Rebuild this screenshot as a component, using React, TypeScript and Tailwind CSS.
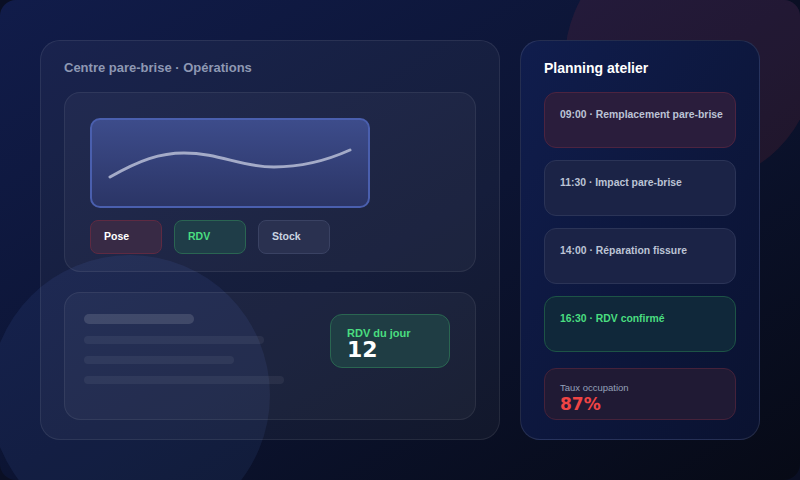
import React from "react";

const sans = { fontFamily: '"Liberation Sans", Arial, sans-serif' };
const heavy = { fontFamily: '"DejaVu Sans", "Liberation Sans", sans-serif' };

function Chip({ label, tone }: { label: string; tone: "red" | "green" | "gray" }) {
  const styles = {
    red: "bg-[#382a45] border-[#5e2a42] text-white",
    green: "bg-[#1f3d48] border-[#2a6552] text-[#4ade80]",
    gray: "bg-[#2a3150] border-[#3a4263] text-[#cbd5e1]",
  }[tone];
  return (
    <div
      className={`w-[72px] h-[34px] rounded-[8px] border flex items-center pl-[13px] text-[10.5px] font-bold ${styles}`}
    >
      {label}
    </div>
  );
}

function Slot({ text, tone }: { text: string; tone: "red" | "plain" | "green" }) {
  const styles = {
    red: "bg-[#2a1d3c] border-[#4c2440] text-[#bcc3d5]",
    plain: "bg-[#1b2346] border-[#2b3457] text-[#bcc3d5]",
    green: "bg-[#10283a] border-[#1d5446] text-[#4ade80]",
  }[tone];
  return (
    <div className={`h-[56px] rounded-[12px] border pl-[15px] pt-[15px] text-[10.4px] font-bold leading-[14px] whitespace-nowrap ${styles}`}>
      {text}
    </div>
  );
}

export default function App() {
  return (
    <div className="w-[800px] h-[480px] bg-[#0a0f24]" style={sans}>
      <div className="relative w-[800px] h-[480px] rounded-[16px] overflow-hidden bg-gradient-to-br from-[#111c4a] via-[#0c1433] to-[#070a16]">
        {/* soft decorative blobs */}
        <div className="absolute left-[565px] top-[-65px] w-[250px] h-[250px] rounded-full bg-[#ef4444]/10" />
        <div className="absolute left-[-10px] top-[255px] w-[280px] h-[280px] rounded-full bg-[#5b7fd9]/10" />

        <div className="relative flex gap-[20px] p-[40px] h-full">
          {/* operations panel */}
          <div className="w-[460px] h-[400px] rounded-[20px] border border-white/[0.08] bg-white/[0.04] px-[23px] pt-[19px]">
            <div className="h-[16px] leading-[16px] text-[13px] font-bold text-[#8e98b3]">
              Centre pare-brise · Opérations
            </div>

            <div className="mt-[16px] h-[180px] rounded-[16px] border border-white/[0.07] bg-white/[0.035] pl-[25px] pt-[25px]">
              <div className="w-[280px] h-[90px] rounded-[10px] border-2 border-[#4a5fae] bg-gradient-to-b from-[#3d4c8b] to-[#2b3566]">
                <svg width="276" height="86" viewBox="0 0 276 86" className="-ml-[2px] -mt-[2px]">
                  <path
                    d="M20 59 C 50 42, 70 35, 94 35 C 130 35, 150 49, 184 49 C 215 49, 240 41, 260 32"
                    fill="none"
                    stroke="#a4abc8"
                    strokeWidth="3"
                    strokeLinecap="round"
                  />
                </svg>
              </div>
              <div className="mt-[12px] flex gap-[12px]">
                <Chip label="Pose" tone="red" />
                <Chip label="RDV" tone="green" />
                <Chip label="Stock" tone="gray" />
              </div>
            </div>

            <div className="mt-[20px] h-[128px] rounded-[16px] border border-white/[0.07] bg-white/[0.035] pl-[19px] pr-[25px] pt-[21px] flex justify-between items-start">
              <div className="flex flex-col">
                <div className="w-[110px] h-[10px] rounded-full bg-white/[0.13]" />
                <div className="mt-[12px] w-[180px] h-[8px] rounded-full bg-white/[0.06]" />
                <div className="mt-[12px] w-[150px] h-[8px] rounded-full bg-white/[0.06]" />
                <div className="mt-[12px] w-[200px] h-[8px] rounded-full bg-white/[0.06]" />
              </div>
              <div className="w-[120px] h-[54px] rounded-[12px] border border-[#2a6651] bg-[#1f3d44] pl-[16px] pt-[11px]">
                <div className="text-[11px] leading-[14px] font-bold text-[#4ade80]">RDV du jour</div>
                <div className="text-[22px] leading-[20px] font-bold text-white" style={heavy}>
                  12
                </div>
              </div>
            </div>
          </div>

          {/* schedule panel */}
          <div className="w-[240px] h-[400px] rounded-[20px] border border-white/[0.1] bg-gradient-to-br from-[#101d4d] to-[#0a1230] px-[23px] pt-[19px]">
            <div className="h-[16px] leading-[16px] text-[14px] font-bold text-white">Planning atelier</div>
            <div className="mt-[16px] flex flex-col gap-[12px]">
              <Slot text="09:00 · Remplacement pare-brise" tone="red" />
              <Slot text="11:30 · Impact pare-brise" tone="plain" />
              <Slot text="14:00 · Réparation fissure" tone="plain" />
              <Slot text="16:30 · RDV confirmé" tone="green" />
              <div className="mt-[4px] h-[52px] rounded-[12px] border border-[#45223a] bg-[#201a34] pl-[15px] pt-[13px]">
                <div className="text-[9.5px] leading-[12px] text-[#94a0b8]">Taux occupation</div>
                <div className="text-[17px] leading-[20px] font-bold text-[#ef4444]" style={heavy}>
                  87%
                </div>
              </div>
            </div>
          </div>
        </div>
      </div>
    </div>
  );
}
